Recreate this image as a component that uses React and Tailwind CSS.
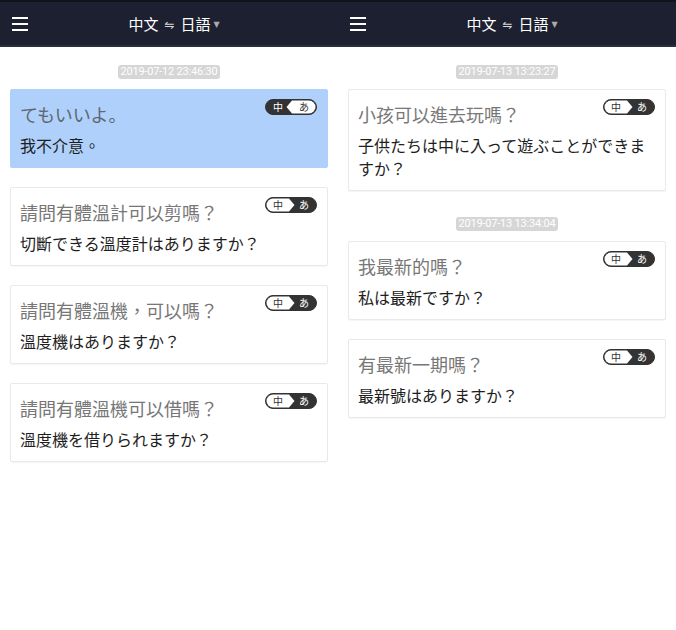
import React from "react";

const cjk = { fontFamily: '"Noto Sans CJK TC", "Noto Sans CJK JP", sans-serif' };
const jp = { fontFamily: '"Noto Sans CJK JP", "Noto Sans CJK TC", sans-serif' };

const panels = [
  [
    {
      time: "2019-07-12 23:46:30",
      cards: [
        { title: "てもいいよ。", sub: "我不介意。", active: true },
        { title: "請問有體溫計可以剪嗎？", sub: "切斷できる溫度計はありますか？" },
        { title: "請問有體溫機，可以嗎？", sub: "溫度機はありますか？" },
        { title: "請問有體溫機可以借嗎？", sub: "溫度機を借りられますか？" },
      ],
    },
  ],
  [
    {
      time: "2019-07-13 13:23:27",
      cards: [{ title: "小孩可以進去玩嗎？", sub: "子供たちは中に入って遊ぶことができますか？" }],
    },
    {
      time: "2019-07-13 13:34:04",
      cards: [
        { title: "我最新的嗎？", sub: "私は最新ですか？" },
        { title: "有最新一期嗎？", sub: "最新號はありますか？" },
      ],
    },
  ],
];

// 中 / あ switch, the white part points toward the dark side
const Toggle = ({ flipped }) => (
  <div className="relative w-[52px] h-[16px] shrink-0 -mt-[2px]">
    <svg width="52" height="16" viewBox="0 0 52 16" className="block">
      <rect x="0.5" y="0.5" width="51" height="15" rx="7.5" fill="#333" stroke="#333" />
      {flipped ? (
        <path d="M44 1.5 L27 1.5 L21.5 8 L27 14.5 L44 14.5 A6.5 6.5 0 0 0 44 1.5 Z" fill="#fff" />
      ) : (
        <path d="M8 1.5 L24 1.5 L29.5 8 L24 14.5 L8 14.5 A6.5 6.5 0 0 1 8 1.5 Z" fill="#fff" />
      )}
    </svg>
    <span
      className={`absolute left-[8px] top-0 text-[10px] leading-[16px] ${flipped ? "text-white" : "text-[#333]"}`}
      style={cjk}
    >
      中
    </span>
    <span
      className={`absolute left-[34px] top-0 text-[10px] leading-[16px] ${flipped ? "text-[#333]" : "text-white"}`}
      style={jp}
    >
      あ
    </span>
  </div>
);

const Card = ({ title, sub, active }) => (
  <div
    className={`border rounded-[2px] pl-[9px] pr-[10px] pt-[11px] pb-[10px] ${
      active ? "bg-[#aed0fb] border-[#aed0fb]" : "bg-white border-[#e9e9e9] shadow-[0_1px_1px_rgba(0,0,0,0.04)]"
    }`}
  >
    <div className="flex justify-between items-start">
      <div
        className={`text-[18px] leading-[26px] ${active ? "text-[#5f6670]" : "text-[#777]"}`}
        style={active ? jp : cjk}
      >
        {title}
      </div>
      <Toggle flipped={active} />
    </div>
    <div className="mt-[7px] text-[16px] leading-[23px] text-[#1e1e1e]" style={active ? cjk : jp}>
      {sub}
    </div>
  </div>
);

const Header = () => (
  <div className="h-[47px] bg-[#1c2030] border-t-2 border-t-[#12141c] border-b-2 border-b-[#2b2f3c] flex items-center relative">
    <div className="absolute left-[12px] top-[15px] flex flex-col gap-[4px]">
      <div className="w-[16px] h-[2px] bg-white" />
      <div className="w-[16px] h-[2px] bg-white" />
      <div className="w-[16px] h-[2px] bg-white" />
    </div>
    <div className="flex-1 flex items-center justify-center text-white pl-[10px] pt-[2px]" style={cjk}>
      <span className="text-[15px]">中文</span>
      <span className="text-[12px] mx-[6px] text-[#d8d8d8]" style={{ fontFamily: '"DejaVu Sans", sans-serif' }}>
        ⇋
      </span>
      <span className="text-[15px]">日語</span>
      <span className="text-[8px] ml-[3px] text-[#aaa]" style={{ fontFamily: '"DejaVu Sans", sans-serif' }}>
        ▼
      </span>
    </div>
  </div>
);

const Panel = ({ groups }) => (
  <div className="w-[338px] h-full bg-white flex flex-col">
    <Header />
    <div className="flex flex-col gap-[26px] pt-[18px] px-[10px]">
      {groups.map((g) => (
        <div key={g.time} className="flex flex-col items-stretch">
          <div
            className="self-center h-[14px] px-[3px] rounded-[3px] bg-[#d6d6d6] text-white text-[11px] leading-[14px] tracking-[-0.2px]"
            style={{ fontFamily: "Roboto, sans-serif" }}
          >
            {g.time}
          </div>
          <div className="mt-[10px] flex flex-col gap-[19px]">
            {g.cards.map((c) => (
              <Card key={c.title} {...c} />
            ))}
          </div>
        </div>
      ))}
    </div>
  </div>
);

export default function App() {
  return (
    <div className="w-[676px] h-[630px] bg-white flex overflow-hidden">
      {panels.map((groups, i) => (
        <Panel key={i} groups={groups} />
      ))}
    </div>
  );
}
